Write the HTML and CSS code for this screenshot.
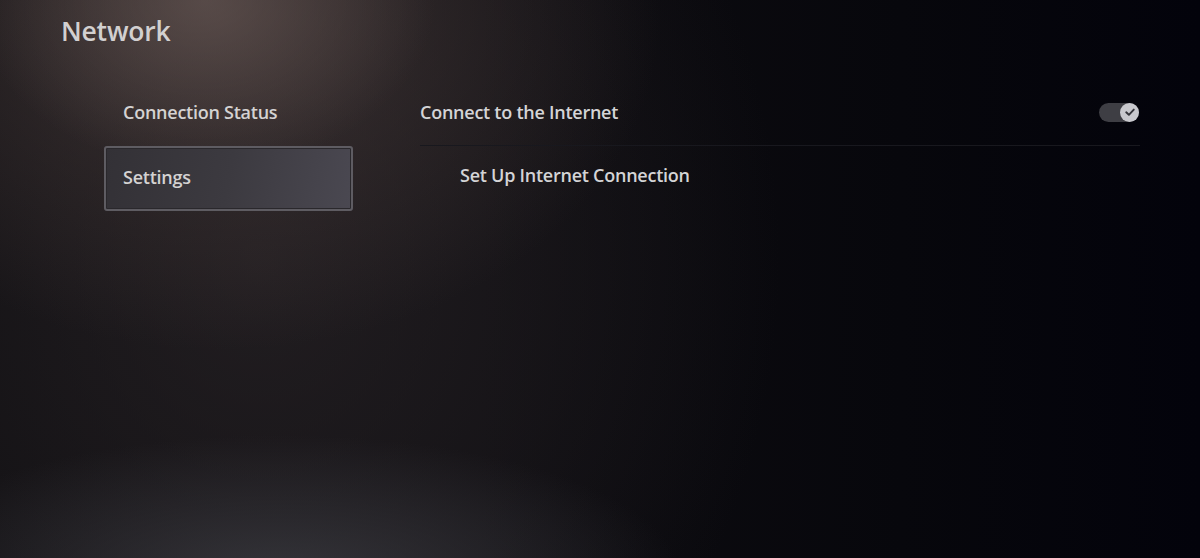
FILE: index.html
```html
<!DOCTYPE html>
<html lang="en">
<head>
<meta charset="utf-8">
<title>Network</title>
<link rel="stylesheet" href="styles.css">
</head>
<body>
<div class="screen">
  <header class="header">
    <h1 class="title">Network</h1>
  </header>
  <div class="main">
    <nav class="nav">
      <div class="nav-item">Connection Status</div>
      <div class="nav-item nav-item-active">Settings</div>
    </nav>
    <section class="content">
      <div class="row row-toggle">
        <span class="row-label">Connect to the Internet</span>
        <span class="toggle">
          <span class="toggle-knob">
            <svg viewBox="0 0 18 18" width="18" height="18" aria-hidden="true">
              <path d="M5.2 9.3 L7.9 11.8 L12.8 6.6" fill="none" stroke="#35353b" stroke-width="1.9" stroke-linecap="round" stroke-linejoin="round"/>
            </svg>
          </span>
        </span>
      </div>
      <div class="row row-sub">
        <span class="row-label">Set Up Internet Connection</span>
      </div>
    </section>
  </div>
</div>
</body>
</html>
```

FILE: styles.css
```css
html, body {
  margin: 0;
  padding: 0;
}

body {
  width: 1200px;
  height: 558px;
  overflow: hidden;
  font-family: "Open Sans", "Noto Sans", sans-serif;
  color: #d6d6d8;
  background-color: #0a090d;
}

.screen {
  width: 1200px;
  height: 558px;
  background:
    radial-gradient(ellipse 230px 170px at 205px 0px, rgba(112, 96, 92, 0.55), rgba(112, 96, 92, 0) 100%),
    radial-gradient(ellipse 440px 330px at 220px 20px, rgba(80, 66, 64, 0.6), rgba(80, 66, 64, 0) 100%),
    radial-gradient(ellipse 400px 140px at 280px 575px, rgba(62, 62, 68, 0.75), rgba(62, 62, 68, 0) 100%),
    radial-gradient(ellipse 520px 620px at 260px 260px, rgba(40, 35, 38, 0.75), rgba(40, 35, 38, 0) 100%),
    linear-gradient(to right, #0f0e11 0%, #0e0d11 40%, #07070c 75%, #03030b 100%);
}

.header {
  height: 81px;
  padding-left: 61px;
  box-sizing: border-box;
}

.title {
  margin: 0;
  padding-top: 12px;
  font-size: 26.5px;
  line-height: 38px;
  font-weight: 600;
  letter-spacing: -0.2px;
  color: #d2d0d0;
}

.main {
  display: grid;
  grid-template-columns: 249px 1fr;
  column-gap: 67px;
  padding-left: 104px;
  padding-right: 60px;
}

.nav {
  display: flex;
  flex-direction: column;
}

.nav-item {
  height: 65px;
  box-sizing: border-box;
  display: flex;
  align-items: center;
  padding-left: 19px;
  padding-bottom: 4px;
  font-size: 18px;
  font-weight: 600;
  letter-spacing: -0.25px;
  color: #d4d2d2;
}

.nav-item-active {
  border: 2px solid #5e5c62;
  border-radius: 3px;
  padding-left: 17px;
  padding-bottom: 4px;
  background: linear-gradient(100deg, #333136 0%, #3c3a40 50%, #4a4851 100%);
  box-shadow: inset 0 0 0 1px #2a282c;
}

.content {
  display: flex;
  flex-direction: column;
}

.row {
  display: flex;
  align-items: center;
  box-sizing: border-box;
}

.row-label {
  font-size: 18px;
  font-weight: 600;
  letter-spacing: -0.25px;
  color: #d4d4d6;
}

.row-toggle {
  height: 65px;
  justify-content: space-between;
  padding-bottom: 2px;
  border-bottom: 1px solid #18181e;
}

.row-sub {
  height: 58px;
  padding-left: 40px;
  padding-bottom: 0px;
}

.toggle {
  display: flex;
  align-items: center;
  justify-content: flex-end;
  width: 40px;
  height: 19px;
  border-radius: 10px;
  background: #3e3e44;
  margin-right: 1px;
}

.toggle-knob {
  display: flex;
  align-items: center;
  justify-content: center;
  width: 19px;
  height: 19px;
  border-radius: 50%;
  background: #c9c9ce;
}
```
